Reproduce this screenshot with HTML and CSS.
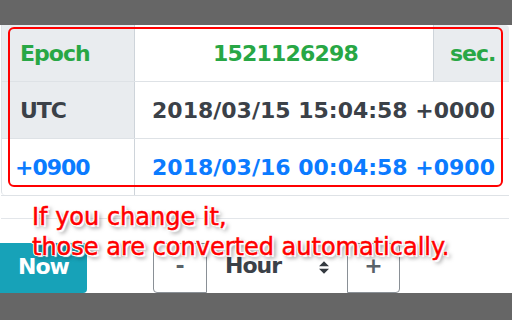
FILE: index.html
```html
<!DOCTYPE html>
<html>
<head>
<meta charset="utf-8">
<link rel="stylesheet" href="styles.css">
</head>
<body>
<div class="topbar"></div>
<div class="table">
  <div class="row">
    <div class="label green">Epoch</div>
    <div class="value center green epoch">1521126298</div>
    <div class="unit green">sec.</div>
  </div>
  <div class="row">
    <div class="label dark">UTC</div>
    <div class="value right dark">2018/03/15 15:04:58 +0000</div>
  </div>
  <div class="row">
    <div class="label zone blue">+0900</div>
    <div class="value right blue">2018/03/16 00:04:58 +0900</div>
  </div>
  <div class="spacer"></div>
</div>
<div class="controls">
  <button class="now">Now</button>
  <div class="group">
    <div class="btn minus">-</div>
    <div class="select">Hour
      <svg class="arrow" viewBox="0 0 4 5" width="10" height="13"><path d="M2 0L0 2h4zm0 5L0 3h4z" fill="#343a40"/></svg>
    </div>
    <div class="btn plus">+</div>
  </div>
</div>
<div class="bottombar"></div>

<div class="highlight"></div>
<div class="note">If you change it,<br>those are converted automatically.</div>
</body>
</html>
```

FILE: styles.css
```css
html, body {
  margin: 0;
  padding: 0;
  width: 512px;
  height: 320px;
  overflow: hidden;
  background: #fff;
  font-family: "DejaVu Sans", Verdana, sans-serif;
  position: relative;
}
.topbar {
  height: 25px;
  background: #666666;
}
.table {
  margin-left: 1px;
  width: 508px;
}
.row {
  display: flex;
  height: 56px;
  border-bottom: 1px solid #dee2e6;
  font-size: 22px;
  font-weight: bold;
}
.label {
  width: 134px;
  box-sizing: border-box;
  background: #e9ecef;
  border-right: 1px solid #ced4da;
  border-left: 1px solid #dee2e6;
  display: flex;
  align-items: center;
  padding-left: 18px;
  letter-spacing: -1px;
}
.label.zone {
  background: #fff;
  padding-left: 13px;
  border-bottom-left-radius: 4px;
}
.value {
  flex: 1;
  display: flex;
  align-items: center;
  padding: 0 14px 0 17px;
}
.value.center { justify-content: center; }
.value.right { justify-content: flex-end; }
.epoch { letter-spacing: -0.8px; }
.unit {
  width: 76px;
  box-sizing: border-box;
  background: #e9ecef;
  border-left: 1px solid #ced4da;
  border-top-right-radius: 4px;
  display: flex;
  align-items: center;
  padding-left: 16px;
  letter-spacing: -1px;
}
.green { color: #28a745; }
.dark { color: #3b4148; }
.blue { color: #0b7bff; }
.spacer {
  height: 22px;
  border-bottom: 1px solid #e3e6ea;
}
.controls {
  margin-top: 24px;
  height: 50px;
  display: flex;
  align-items: stretch;
}
.now {
  width: 87px;
  margin: 0;
  border: none;
  border-radius: 0 4px 4px 0;
  background: #17a2b8;
  color: #fff;
  font-family: "DejaVu Sans", Verdana, sans-serif;
  font-weight: bold;
  font-size: 22px;
  letter-spacing: -1px;
  padding: 0 0 4px 0;
}
.group {
  margin-left: 66px;
  display: flex;
  font-size: 22px;
  font-weight: bold;
  color: #3b4148;
}
.btn {
  box-sizing: border-box;
  border: 1px solid #8a9096;
  border-radius: 4px;
  display: flex;
  align-items: center;
  justify-content: center;
  padding-bottom: 6px;
  font-weight: bold;
  color: #5a6268;
}
.minus { width: 54px; border-top-right-radius: 0; border-bottom-right-radius: 0; }
.plus { width: 53px; border-top-left-radius: 0; border-bottom-left-radius: 0; }
.select {
  width: 140px;
  box-sizing: border-box;
  display: flex;
  align-items: center;
  padding: 0 0 6px 18px;
  letter-spacing: -1px;
  position: relative;
}
.arrow {
  margin-left: auto;
  margin-right: 18px;
  margin-top: 5px;
}
.bottombar {
  height: 27px;
  background: #666666;
}
.highlight {
  position: absolute;
  left: 8px;
  top: 27px;
  width: 491px;
  height: 156px;
  border: 2px solid #ff0000;
  border-radius: 6px;
}
.note {
  position: absolute;
  left: 32px;
  top: 202px;
  font-family: "DejaVu Sans", Verdana, sans-serif;
  font-size: 24px;
  line-height: 30px;
  color: #ff0000;
  white-space: nowrap;
  -webkit-text-stroke: 0.5px #ff0000;
  text-shadow:
    1px 0 0 #fff, -1px 0 0 #fff, 0 1px 0 #fff, 0 -1px 0 #fff,
    1px 1px 0 #fff, -1px -1px 0 #fff, 1px -1px 0 #fff, -1px 1px 0 #fff,
    2px 2px 1px #fff,
    3px 3px 4px rgba(0, 0, 0, 0.55);
}
```
